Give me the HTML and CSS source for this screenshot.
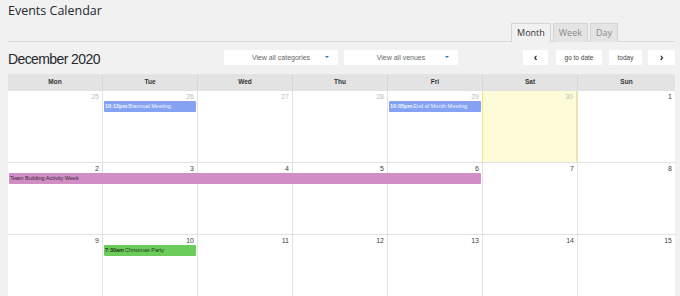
FILE: index.html
```html
<!DOCTYPE html>
<html lang="en">
<head>
    <meta charset="UTF-8">
    <title>Events Calendar</title>
    <link rel="stylesheet" href="styles.css">
</head>
<body>
    <div class="wrap">
        <h1 class="page-title">Events Calendar</h1>

        <div class="view-tabs">
            <span class="tab active">Month</span>
            <span class="tab">Week</span>
            <span class="tab">Day</span>
        </div>

        <div class="toolbar">
            <h2 class="month-title">December 2020</h2>
            <div class="filters">
                <div class="select">View all categories<span class="caret"></span></div>
                <div class="select">View all venues<span class="caret"></span></div>
            </div>
            <div class="nav-buttons">
                <button class="btn arrow">&#8249;</button>
                <button class="btn">go to date</button>
                <button class="btn">today</button>
                <button class="btn arrow">&#8250;</button>
            </div>
        </div>

        <div class="calendar">
            <div class="head">
                <div>Mon</div><div>Tue</div><div>Wed</div><div>Thu</div><div>Fri</div><div>Sat</div><div>Sun</div>
            </div>

            <div class="week">
                <div class="day other">25</div>
                <div class="day other">26</div>
                <div class="day other">27</div>
                <div class="day other">28</div>
                <div class="day other">29</div>
                <div class="day other today">30</div>
                <div class="day">1</div>
                <div class="event blue col-2"><b>10:12pm</b>Biannual Meeting</div>
                <div class="event blue col-5"><b>10:05pm</b>End of Month Meeting</div>
            </div>

            <div class="week">
                <div class="day">2</div>
                <div class="day">3</div>
                <div class="day">4</div>
                <div class="day">5</div>
                <div class="day">6</div>
                <div class="day">7</div>
                <div class="day">8</div>
                <div class="event pink col-1 span-5">Team Building Activity Week</div>
            </div>

            <div class="week">
                <div class="day">9</div>
                <div class="day">10</div>
                <div class="day">11</div>
                <div class="day">12</div>
                <div class="day">13</div>
                <div class="day">14</div>
                <div class="day">15</div>
                <div class="event green col-2"><b>7:30am</b>Christmas Party</div>
            </div>
        </div>
    </div>
</body>
</html>
```

FILE: styles.css
```css
body {
    margin: 0;
    background-color: #f1f1f1;
    font-family: "Liberation Sans", Arial, sans-serif;
    color: #333;
}
.wrap {
    width: 667px;
    padding-left: 8px;
}
.page-title {
    margin: 0;
    padding-top: 2px;
    height: 21px;
    font-family: "Open Sans", sans-serif;
    font-size: 12.5px;
    font-weight: 400;
    color: #23282d;
}
.view-tabs {
    display: flex;
    justify-content: flex-end;
    gap: 2px;
    height: 18px;
    padding-right: 57px;
    border-bottom: 1px solid #d9d9d9;
}
.view-tabs .tab {
    box-sizing: border-box;
    height: 19px;
    padding: 0 5px;
    font-family: "Open Sans", sans-serif;
    font-size: 9px;
    line-height: 17px;
    color: #888;
    background-color: #e4e4e4;
    border: 1px solid #d4d4d4;
    border-bottom: none;
}
.view-tabs .tab.active {
    color: #333;
    background-color: #f1f1f1;
}
.toolbar {
    display: flex;
    align-items: flex-start;
    height: 17px;
    margin-top: 8px;
    margin-bottom: 7px;
}
.month-title {
    width: 216px;
    margin: 1px 0 0;
    font-size: 14px;
    font-weight: 400;
    line-height: 16px;
    letter-spacing: -0.6px;
    color: #23282d;
}
.filters {
    display: flex;
    gap: 6px;
}
.select {
    position: relative;
    width: 114px;
    height: 15px;
    background-color: #fff;
    font-size: 7px;
    line-height: 15px;
    text-align: center;
    color: #666;
}
.select .caret {
    position: absolute;
    right: 9px;
    top: 6px;
    border-left: 2px solid transparent;
    border-right: 2px solid transparent;
    border-top: 2px solid #2e7bb8;
}
.nav-buttons {
    display: flex;
    margin-left: auto;
}
.btn {
    height: 15px;
    padding: 0;
    margin-left: 7px;
    background-color: #fff;
    border: none;
    font-family: "Liberation Sans", Arial, sans-serif;
    font-size: 6.5px;
    color: #444;
    cursor: pointer;
}
.btn:nth-child(1) { width: 25px; margin-left: 0; }
.btn:nth-child(2) { width: 46px; margin-left: 8px; }
.btn:nth-child(3) { width: 33px; }
.btn:nth-child(4) { width: 27px; margin-left: 6px; }
.btn.arrow {
    font-size: 11px;
    font-weight: bold;
    line-height: 15px;
    color: #111;
}
.calendar {
    width: 667px;
    background-color: #fff;
}
.head,
.week {
    display: grid;
    grid-template-columns: 94px repeat(5, 95px) minmax(0, 1fr);
}
.head {
    height: 16px;
    background-color: #e3e3e3;
}
.head div {
    border-left: 1px solid #d6d6d6;
    font-size: 6.5px;
    font-weight: bold;
    line-height: 16px;
    text-align: center;
    color: #333;
}
.head div:first-child {
    border-left: none;
}
.week {
    grid-template-rows: 10px 11px 1fr;
    height: 71px;
    border-top: 1px solid #e2e2e2;
}
.week .day {
    grid-row: 1 / -1;
    border-left: 1px solid #e2e2e2;
    padding: 2px 3px 0 0;
    font-size: 7px;
    text-align: right;
    color: #444;
}
.week .day:nth-child(1) { grid-column: 1; border-left: none; }
.week .day:nth-child(2) { grid-column: 2; }
.week .day:nth-child(3) { grid-column: 3; }
.week .day:nth-child(4) { grid-column: 4; }
.week .day:nth-child(5) { grid-column: 5; }
.week .day:nth-child(6) { grid-column: 6; }
.week .day:nth-child(7) { grid-column: 7; }
.week .day.other {
    color: #bdbdbd;
}
.week .day.today {
    background-color: #fefcd8;
    border-left-color: #f2e58a;
    border-right: 1px solid #f2e58a;
}
.event {
    grid-row: 2;
    margin: 0 1px 0 2px;
    padding-left: 1px;
    border-radius: 1px;
    font-size: 5.5px;
    line-height: 11px;
    white-space: nowrap;
    overflow: hidden;
}
.event b {
    margin-right: 1px;
}
.event.blue {
    background-color: #86a3f3;
    color: #f4f6ff;
}
.event.pink {
    background-color: #d08ec4;
    color: #3a2436;
    margin-left: 1px;
}
.event.green {
    background-color: #6bcc5b;
    color: #1e3a17;
}
.col-1 { grid-column-start: 1; }
.col-2 { grid-column-start: 2; }
.col-5 { grid-column-start: 5; }
.span-5 { grid-column-end: span 5; }
```
